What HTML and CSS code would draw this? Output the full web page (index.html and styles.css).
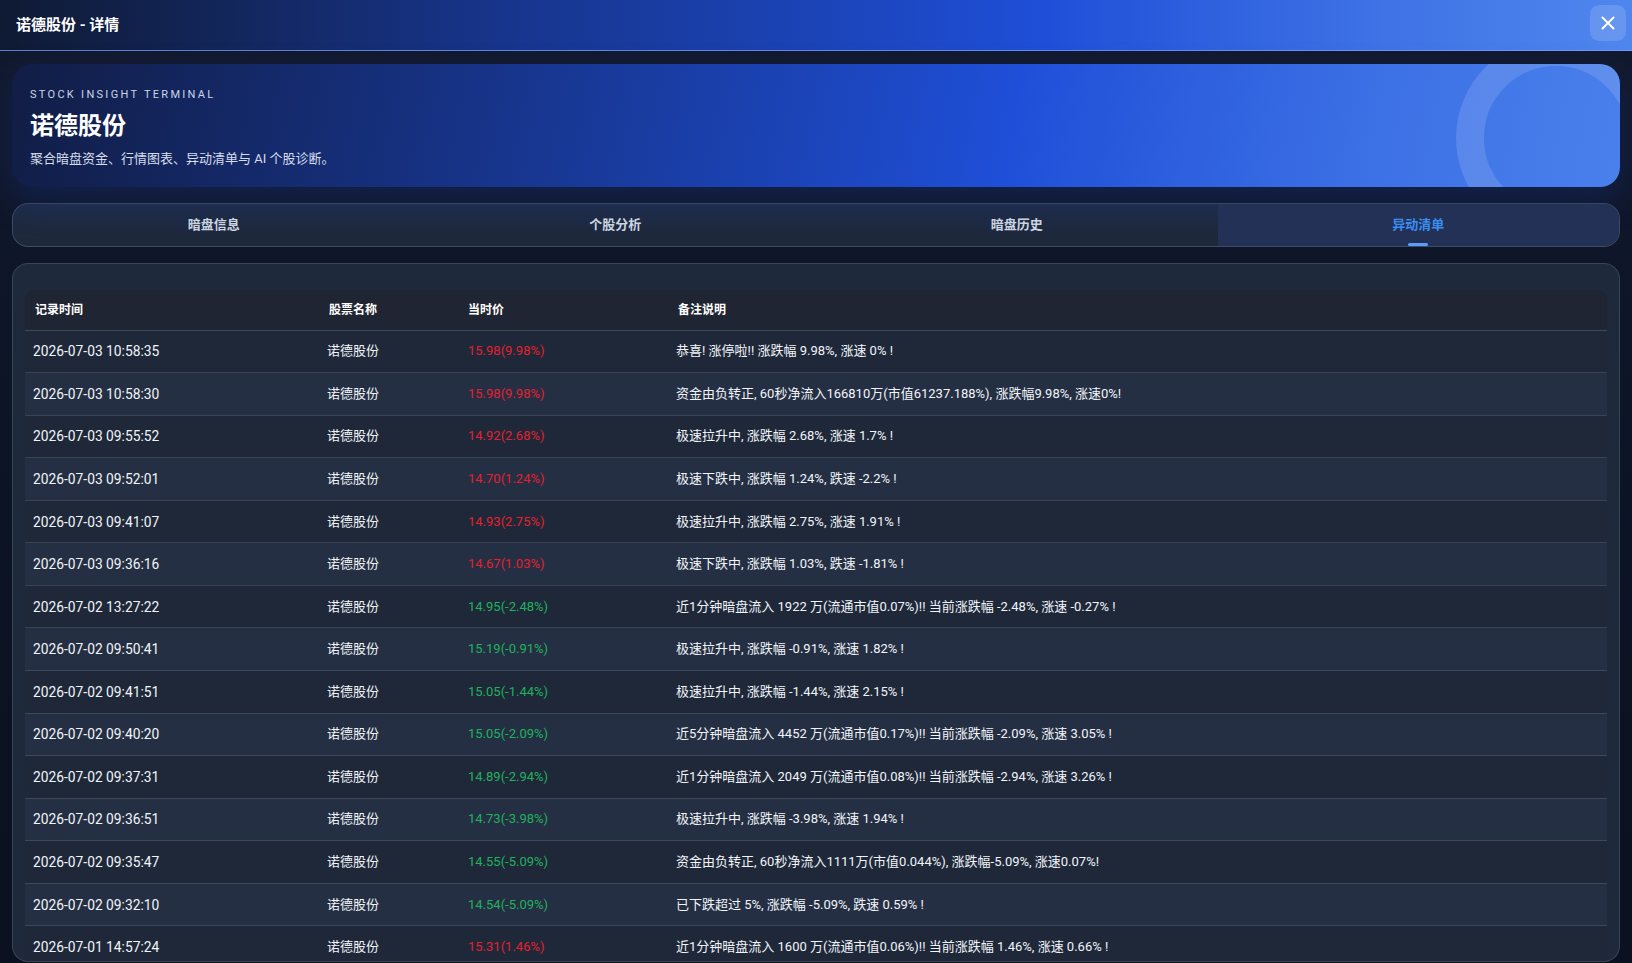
FILE: index.html
```html
<!DOCTYPE html>
<html lang="zh-CN">
<head>
<meta charset="utf-8">
<title>诺德股份 - 详情</title>
<link rel="stylesheet" href="styles.css">
</head>
<body>
<div class="modal">
  <header class="modal-header">
    <div class="modal-title">诺德股份 - 详情</div>
    <button class="close-btn" aria-label="关闭">
      <svg width="18" height="18" viewBox="0 0 18 18"><path d="M3.5 3.5 L14.5 14.5 M14.5 3.5 L3.5 14.5" stroke="#fff" stroke-width="2" stroke-linecap="round" fill="none"/></svg>
    </button>
  </header>
  <div class="modal-body">
    <section class="hero">
      <div class="hero-ring"></div>
      <div class="hero-label">STOCK INSIGHT TERMINAL</div>
      <h1 class="hero-title">诺德股份</h1>
      <p class="hero-sub">聚合暗盘资金、行情图表、异动清单与 AI 个股诊断。</p>
    </section>
    <nav class="tabs">
      <div class="tab">暗盘信息</div>
      <div class="tab">个股分析</div>
      <div class="tab">暗盘历史</div>
      <div class="tab active">异动清单</div>
    </nav>
    <section class="card">
      <table class="grid">
        <colgroup>
          <col class="c-time"><col class="c-name"><col class="c-price"><col class="c-note">
        </colgroup>
        <thead>
          <tr><th>记录时间</th><th>股票名称</th><th>当时价</th><th>备注说明</th></tr>
        </thead>
        <tbody>
          <tr><td class="time">2026-07-03 10:58:35</td><td>诺德股份</td><td class="up">15.98(9.98%)</td><td>恭喜! 涨停啦!! 涨跌幅 9.98%, 涨速 0% !</td></tr>
          <tr><td class="time">2026-07-03 10:58:30</td><td>诺德股份</td><td class="up">15.98(9.98%)</td><td>资金由负转正, 60秒净流入166810万(市值61237.188%), 涨跌幅9.98%, 涨速0%!</td></tr>
          <tr><td class="time">2026-07-03 09:55:52</td><td>诺德股份</td><td class="up">14.92(2.68%)</td><td>极速拉升中, 涨跌幅 2.68%, 涨速 1.7% !</td></tr>
          <tr><td class="time">2026-07-03 09:52:01</td><td>诺德股份</td><td class="up">14.70(1.24%)</td><td>极速下跌中, 涨跌幅 1.24%, 跌速 -2.2% !</td></tr>
          <tr><td class="time">2026-07-03 09:41:07</td><td>诺德股份</td><td class="up">14.93(2.75%)</td><td>极速拉升中, 涨跌幅 2.75%, 涨速 1.91% !</td></tr>
          <tr><td class="time">2026-07-03 09:36:16</td><td>诺德股份</td><td class="up">14.67(1.03%)</td><td>极速下跌中, 涨跌幅 1.03%, 跌速 -1.81% !</td></tr>
          <tr><td class="time">2026-07-02 13:27:22</td><td>诺德股份</td><td class="down">14.95(-2.48%)</td><td>近1分钟暗盘流入 1922 万(流通市值0.07%)!! 当前涨跌幅 -2.48%, 涨速 -0.27% !</td></tr>
          <tr><td class="time">2026-07-02 09:50:41</td><td>诺德股份</td><td class="down">15.19(-0.91%)</td><td>极速拉升中, 涨跌幅 -0.91%, 涨速 1.82% !</td></tr>
          <tr><td class="time">2026-07-02 09:41:51</td><td>诺德股份</td><td class="down">15.05(-1.44%)</td><td>极速拉升中, 涨跌幅 -1.44%, 涨速 2.15% !</td></tr>
          <tr><td class="time">2026-07-02 09:40:20</td><td>诺德股份</td><td class="down">15.05(-2.09%)</td><td>近5分钟暗盘流入 4452 万(流通市值0.17%)!! 当前涨跌幅 -2.09%, 涨速 3.05% !</td></tr>
          <tr><td class="time">2026-07-02 09:37:31</td><td>诺德股份</td><td class="down">14.89(-2.94%)</td><td>近1分钟暗盘流入 2049 万(流通市值0.08%)!! 当前涨跌幅 -2.94%, 涨速 3.26% !</td></tr>
          <tr><td class="time">2026-07-02 09:36:51</td><td>诺德股份</td><td class="down">14.73(-3.98%)</td><td>极速拉升中, 涨跌幅 -3.98%, 涨速 1.94% !</td></tr>
          <tr><td class="time">2026-07-02 09:35:47</td><td>诺德股份</td><td class="down">14.55(-5.09%)</td><td>资金由负转正, 60秒净流入1111万(市值0.044%), 涨跌幅-5.09%, 涨速0.07%!</td></tr>
          <tr><td class="time">2026-07-02 09:32:10</td><td>诺德股份</td><td class="down">14.54(-5.09%)</td><td>已下跌超过 5%, 涨跌幅 -5.09%, 跌速 0.59% !</td></tr>
          <tr><td class="time">2026-07-01 14:57:24</td><td>诺德股份</td><td class="up">15.31(1.46%)</td><td>近1分钟暗盘流入 1600 万(流通市值0.06%)!! 当前涨跌幅 1.46%, 涨速 0.66% !</td></tr>
        </tbody>
      </table>
    </section>
  </div>
</div>
</body>
</html>
```

FILE: styles.css
```css
* { box-sizing: border-box; }

html, body {
  margin: 0;
  padding: 0;
  height: 100%;
}

body {
  background: #0c1322;
  font-family: Roboto, "Noto Sans CJK SC", sans-serif;
  color: #f1f5f9;
  overflow: hidden;
}

.modal {
  width: 1632px;
  height: 963px;
  display: flex;
  flex-direction: column;
  background: linear-gradient(180deg, #121a2f 0%, #0d1426 40%, #0b1120 100%);
}

.modal-header {
  flex: 0 0 51px;
  display: flex;
  align-items: center;
  justify-content: space-between;
  padding: 0 6px 0 16px;
  background: linear-gradient(90deg, #0f1a33 0%, #17348a 30%, #1f4fd8 64%, #3f73e6 85%, #4f86ee 100%);
  border-bottom: 1px solid rgba(120, 160, 255, 0.75);
}

.modal-title {
  font-size: 15px;
  font-weight: 700;
  color: #ffffff;
  margin-top: -3px;
}

.close-btn {
  width: 36px;
  height: 36px;
  border: none;
  border-radius: 9px;
  background: rgba(255, 255, 255, 0.14);
  display: flex;
  align-items: center;
  justify-content: center;
  padding: 0;
  margin-top: -5px;
  cursor: pointer;
}

.modal-body {
  flex: 1;
  display: flex;
  flex-direction: column;
  gap: 16px;
  padding: 13px 12px 1px 12px;
  min-height: 0;
}

.hero {
  position: relative;
  flex: 0 0 123px;
  overflow: hidden;
  border-radius: 20px;
  padding: 23px 18px 0 18px;
  background: linear-gradient(100deg, #111d45 0%, #17348a 30%, #1f4fd8 62%, #3c70e5 84%, #4a80ec 100%);
  box-shadow: 0 14px 34px rgba(29, 60, 160, 0.28);
}

.hero-ring {
  position: absolute;
  left: 1444px;
  top: -26px;
  width: 200px;
  height: 200px;
  border-radius: 50%;
  border: 28px solid rgba(255, 255, 255, 0.13);
}

.hero-label {
  position: relative;
  font-size: 11px;
  line-height: 16px;
  letter-spacing: 2.3px;
  color: #cdd5e6;
}

.hero-title {
  position: relative;
  margin: 7px 0 0 0;
  font-size: 24px;
  line-height: 32px;
  font-weight: 700;
  color: #ffffff;
}

.hero-sub {
  position: relative;
  margin: 7px 0 0 0;
  font-size: 13px;
  line-height: 20px;
  color: #d6ddec;
}

.tabs {
  flex: 0 0 44px;
  display: grid;
  grid-template-columns: repeat(4, 1fr);
  border: 1px solid rgba(148, 163, 184, 0.28);
  border-radius: 16px;
  overflow: hidden;
  background: linear-gradient(180deg, #1f2b46 0%, #1d2839 100%);
}

.tab {
  position: relative;
  display: flex;
  align-items: center;
  justify-content: center;
  font-size: 13px;
  font-weight: 600;
  color: #cbd5e1;
  padding-bottom: 4px;
}

.tab.active {
  color: #3b8df2;
  background: #223155;
}

.tab.active::after {
  content: "";
  position: absolute;
  bottom: 0;
  left: 50%;
  width: 20px;
  height: 3px;
  margin-left: -10px;
  border-radius: 2px;
  background: #5b9cf8;
}

.card {
  flex: 1;
  min-height: 0;
  overflow: hidden;
  border: 1px solid rgba(148, 163, 184, 0.22);
  border-radius: 16px;
  background: #1f293c;
  padding: 26px 12px 0 12px;
}

.grid {
  width: 100%;
  border-collapse: collapse;
  table-layout: fixed;
  font-size: 13px;
}

.c-time { width: 294px; }
.c-name { width: 139px; }
.c-price { width: 210px; }

.grid thead tr {
  height: 40px;
  background: #1f2533;
}

.grid th {
  text-align: left;
  padding: 0 10px 3px 10px;
  font-size: 12px;
  font-weight: 700;
  color: #ffffff;
  border-bottom: 1px solid rgba(148, 163, 184, 0.28);
}

.grid th:first-child { border-top-left-radius: 10px; }
.grid th:last-child { border-top-right-radius: 10px; }

.grid tbody tr {
  height: 42.57px;
  background: #1f2839;
}

.grid tbody tr:nth-child(even) {
  background: #252f43;
}

.grid td {
  padding: 0 8px;
  white-space: nowrap;
  color: #f1f5f9;
  line-height: 18px;
  border-bottom: 1px solid rgba(148, 163, 184, 0.22);
}

.grid td.time { font-size: 13.8px; }
.grid td.up,
.grid td.down { padding-left: 10px; }
.grid td.up { color: #e4202f; }
.grid td.down { color: #1fb25c; }
```
